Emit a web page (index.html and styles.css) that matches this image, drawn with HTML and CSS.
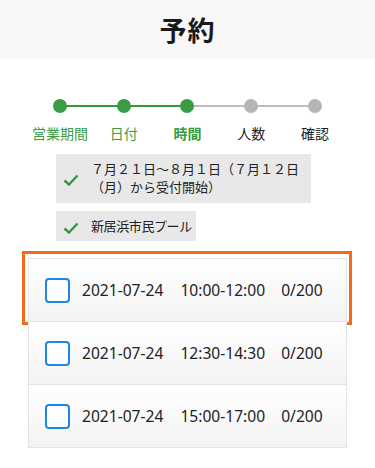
FILE: index.html
```html
<!DOCTYPE html>
<html lang="ja">
<head>
  <meta charset="UTF-8" />
  <meta name="viewport" content="width=device-width, initial-scale=1.0" />
  <title>予約</title>
  <link rel="stylesheet" href="styles.css">
</head>
<body>

  <!-- En-tête -->
  <header class="page-header">
    <h1>予約</h1>
  </header>

  <!-- Étapes -->
  <ol class="steps">
    <li class="step done"><span class="dot"></span><span class="label">営業期間</span></li>
    <li class="step done"><span class="dot"></span><span class="label">日付</span></li>
    <li class="step done current"><span class="dot"></span><span class="label">時間</span></li>
    <li class="step"><span class="dot"></span><span class="label">人数</span></li>
    <li class="step"><span class="dot"></span><span class="label">確認</span></li>
  </ol>

  <!-- Sélections -->
  <div class="choices">
    <div class="choice choice-period">
      <svg class="check" width="16" height="12" viewBox="0 0 16 12"><path d="M1.5 6.5 L6 10.5 L14.5 1.5" fill="none" stroke="#2e9b3e" stroke-width="2.4"/></svg>
      <span>７月２１日～８月１日（７月１２日（月）から受付開始）</span>
    </div>
    <div class="choice choice-place">
      <svg class="check" width="16" height="12" viewBox="0 0 16 12"><path d="M1.5 6.5 L6 10.5 L14.5 1.5" fill="none" stroke="#2e9b3e" stroke-width="2.4"/></svg>
      <span>新居浜市民プール</span>
    </div>
  </div>

  <!-- Créneaux -->
  <div class="slots">
    <label class="slot highlight">
      <span class="box"></span>
      <span class="date">2021-07-24</span>
      <span class="time">10:00-12:00</span>
      <span class="count">0/200</span>
    </label>
    <label class="slot">
      <span class="box"></span>
      <span class="date">2021-07-24</span>
      <span class="time">12:30-14:30</span>
      <span class="count">0/200</span>
    </label>
    <label class="slot">
      <span class="box"></span>
      <span class="date">2021-07-24</span>
      <span class="time">15:00-17:00</span>
      <span class="count">0/200</span>
    </label>
  </div>

</body>
</html>
```

FILE: styles.css
```css
body {
  font-family: "Noto Sans", "Noto Sans CJK JP", sans-serif;
  margin: 0;
  padding: 0;
  background: #ffffff;
  color: #222222;
}

.page-header {
  background: #f8f8f8;
  height: 59px;
  display: flex;
  justify-content: center;
  align-items: center;
}

.page-header h1 {
  margin: 0;
  font-size: 27px;
  font-weight: bold;
  color: #1a1a1a;
  letter-spacing: 1px;
}

/* Barre d'étapes */
.steps {
  list-style: none;
  margin: 0;
  padding: 40px 28px 0;
  display: grid;
  grid-template-columns: repeat(5, 1fr);
}

.step {
  position: relative;
  display: flex;
  flex-direction: column;
  align-items: center;
}

.step + .step::before {
  content: "";
  position: absolute;
  top: 6px;
  left: -50%;
  width: 100%;
  height: 2px;
  background: #bdbdbd;
}

.step.done + .step.done::before {
  background: #2e9b3e;
}

.dot {
  position: relative;
  z-index: 1;
  width: 14px;
  height: 14px;
  border-radius: 50%;
  background: #b5b5b5;
}

.step.done .dot {
  background: #3a9d43;
}

.label {
  margin-top: 11px;
  font-size: 14px;
  line-height: 20px;
  color: #222222;
}

.step.done .label {
  color: #3a9d43;
}

.step.current .label {
  font-weight: bold;
}

/* Choix */
.choices {
  padding: 10px 0 0 56px;
  display: flex;
  flex-direction: column;
  align-items: flex-start;
  gap: 8px;
}

.choice {
  background: #e8e8e8;
  display: flex;
  align-items: center;
  gap: 12px;
  padding: 6px 12px 6px 7px;
  font-size: 13px;
  line-height: 18px;
  color: #222222;
}

.choice-period {
  width: 236px;
  padding-top: 6px;
  padding-bottom: 7px;
}

.choice-place {
  padding-right: 4px;
  letter-spacing: -0.4px;
}

.check {
  flex: none;
  margin-top: 4px;
}

/* Liste des créneaux */
.slots {
  margin: 18px 28px 0;
}

.slot {
  position: relative;
  display: flex;
  align-items: center;
  height: 62px;
  padding-left: 16px;
  border: 1px solid #e4e4e4;
  margin-top: -1px;
  background: linear-gradient(#ffffff, #f3f3f3);
  font-size: 15.6px;
  color: #222222;
  cursor: pointer;
}

.slot.highlight::after {
  content: "";
  position: absolute;
  top: -8px;
  left: -7px;
  right: -6px;
  bottom: -4px;
  border: 3px solid #f26a1b;
  pointer-events: none;
}

.box {
  width: 21px;
  height: 21px;
  border: 2.5px solid #1f86e6;
  border-radius: 4px;
  margin-right: 12px;
  background: #ffffff;
}

.date {
  margin-right: 17px;
}

.time {
  margin-right: 16px;
}
```
